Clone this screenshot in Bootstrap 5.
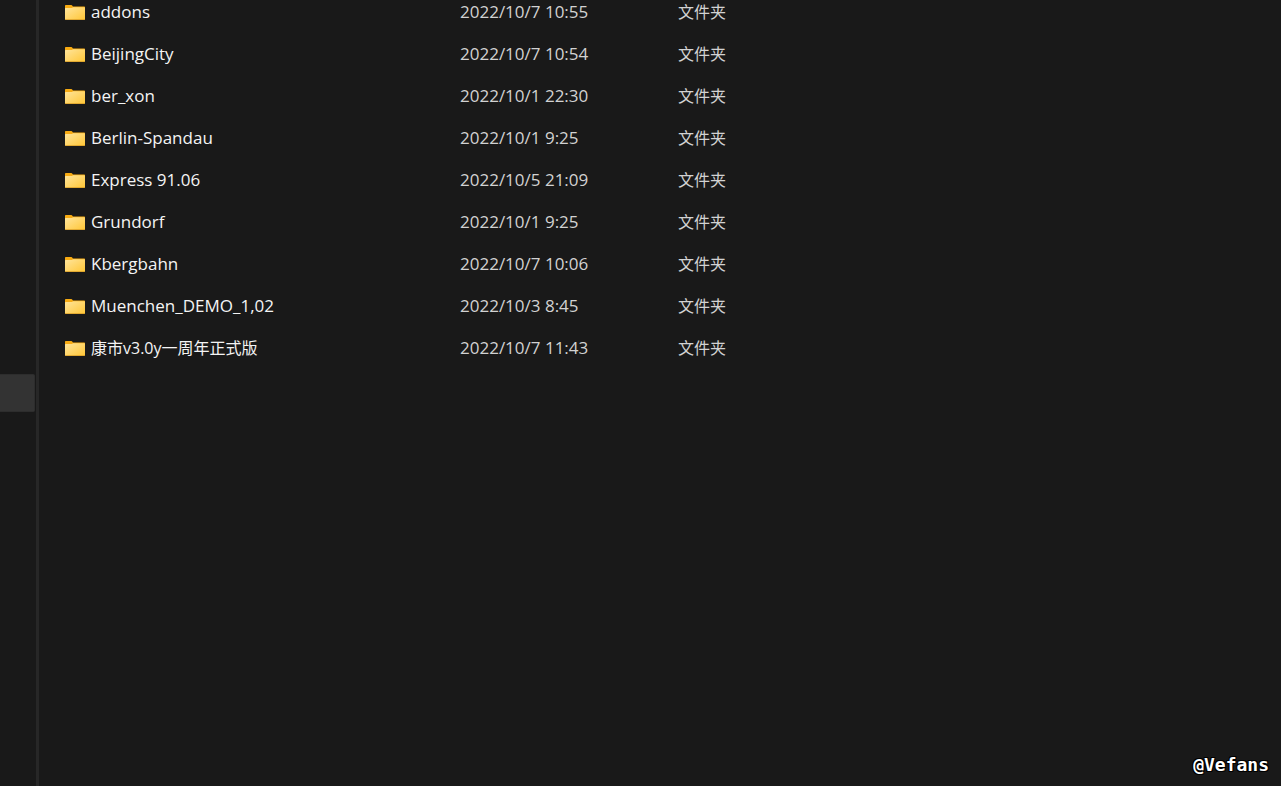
<!DOCTYPE html>
<html lang="zh-CN" data-bs-theme="dark">
<head>
<meta charset="utf-8">
<meta name="viewport" content="width=device-width, initial-scale=1">
<title>Maps</title>
<link href="https://cdn.jsdelivr.net/npm/bootstrap@5.3.0/dist/css/bootstrap.min.css" rel="stylesheet">
<style>
body{background:#191919;color:#fff;font-family:"Open Sans","Noto Sans CJK SC",sans-serif;font-size:17px;line-height:24px}
.side-pane{width:39px;border-right:3px solid #272727;padding-top:374px}
.side-item{height:38px;width:35px;background:#333;border:1px solid #2d2d2d;border-left:0;border-radius:0 2px 2px 0}
.file-list{table-layout:fixed;width:100%}
.file-list td{padding:0 0 18px;white-space:nowrap;color:#d2d2d2}
.file-list .file-name{color:#f4f4f4;gap:6px}
.file-main{padding-left:26px}
.col-name{width:395px}
.col-date{width:218px}
.file-list .file-cjk{font-size:16px}
.file-name svg{width:20px;height:15px}
.credit{right:12px;bottom:9px;font-family:"DejaVu Sans Mono",monospace;font-size:18px;font-weight:700;text-shadow:1px 1px 0 #000,-1px 1px 0 #000,1px -1px 0 #000,-1px -1px 0 #000}
</style>
</head>
<body>
<svg width="0" height="0" class="position-absolute" aria-hidden="true">
<defs>
<linearGradient id="folderFront" x1="0" y1="0" x2="1" y2="1"><stop offset="0" stop-color="#ffe59c"/><stop offset="1" stop-color="#ffc636"/></linearGradient>
<symbol id="folder" viewBox="0 0 20 15">
<path d="M0 .8Q0 0 .8 0H6.2Q7 0 7.4 .7L7.9 1.4H19.3Q20 1.4 20 2.1V7H0Z" fill="#f8ab12"/>
<path d="M0 3.6Q0 3 .7 3H6.5Q7.1 3 7.5 2.5Q7.8 2.2 8.2 2.2H19.3Q20 2.2 20 2.9V14.2Q20 15 19.2 15H.8Q0 15 0 14.2Z" fill="url(#folderFront)"/>
<path d="M.2 14.6H19.8" stroke="#d69a26" stroke-width=".8"/>
</symbol>
</defs>
</svg>
<div class="d-flex min-vh-100">
<aside class="side-pane flex-shrink-0"><div class="side-item"></div></aside>
<main class="file-main flex-grow-1">
<table class="file-list"><colgroup><col class="col-name"><col class="col-date"><col></colgroup>
<tbody>
<tr><td><div class="file-name d-flex align-items-center"><svg aria-hidden="true"><use href="#folder"/></svg><span>addons</span></div></td><td>2022/10/7 10:55</td><td class="file-cjk">文件夹</td></tr>
<tr><td><div class="file-name d-flex align-items-center"><svg aria-hidden="true"><use href="#folder"/></svg><span>BeijingCity</span></div></td><td>2022/10/7 10:54</td><td class="file-cjk">文件夹</td></tr>
<tr><td><div class="file-name d-flex align-items-center"><svg aria-hidden="true"><use href="#folder"/></svg><span>ber_xon</span></div></td><td>2022/10/1 22:30</td><td class="file-cjk">文件夹</td></tr>
<tr><td><div class="file-name d-flex align-items-center"><svg aria-hidden="true"><use href="#folder"/></svg><span>Berlin-Spandau</span></div></td><td>2022/10/1 9:25</td><td class="file-cjk">文件夹</td></tr>
<tr><td><div class="file-name d-flex align-items-center"><svg aria-hidden="true"><use href="#folder"/></svg><span>Express 91.06</span></div></td><td>2022/10/5 21:09</td><td class="file-cjk">文件夹</td></tr>
<tr><td><div class="file-name d-flex align-items-center"><svg aria-hidden="true"><use href="#folder"/></svg><span>Grundorf</span></div></td><td>2022/10/1 9:25</td><td class="file-cjk">文件夹</td></tr>
<tr><td><div class="file-name d-flex align-items-center"><svg aria-hidden="true"><use href="#folder"/></svg><span>Kbergbahn</span></div></td><td>2022/10/7 10:06</td><td class="file-cjk">文件夹</td></tr>
<tr><td><div class="file-name d-flex align-items-center"><svg aria-hidden="true"><use href="#folder"/></svg><span>Muenchen_DEMO_1,02</span></div></td><td>2022/10/3 8:45</td><td class="file-cjk">文件夹</td></tr>
<tr><td><div class="file-name d-flex align-items-center"><svg aria-hidden="true"><use href="#folder"/></svg><span class="file-cjk">康市v3.0y一周年正式版</span></div></td><td>2022/10/7 11:43</td><td class="file-cjk">文件夹</td></tr>
</tbody></table>
</main></div>
<div class="position-absolute credit">@Vefans</div>
<script src="https://cdn.jsdelivr.net/npm/bootstrap@5.3.0/dist/js/bootstrap.bundle.min.js"></script>
</body></html>
